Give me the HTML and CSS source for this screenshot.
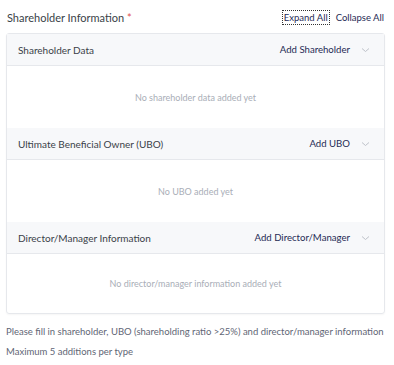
FILE: index.html
```html
<!DOCTYPE html>
<html lang="en">
<head>
  <meta charset="UTF-8">
  <meta name="viewport" content="width=device-width, initial-scale=1.0">
  <title>Shareholder Information</title>
  <link rel="stylesheet" href="styles.css">
</head>
<body>
  <div class="page">
    <div class="title-row">
      <div class="title">Shareholder Information <span class="req">*</span></div>
      <div class="actions">
        <span class="link focused">Expand All</span>
        <span class="link">Collapse All</span>
      </div>
    </div>

    <div class="card">
      <div class="section">
        <div class="section-head">
          <span class="section-name">Shareholder Data</span>
          <span class="add">Add Shareholder</span>
          <svg class="chev" width="9" height="6" viewBox="0 0 9 6"><path d="M1 1.5 L4.5 4.5 L8 1.5" fill="none" stroke="#b8bcc4" stroke-width="0.9"/></svg>
        </div>
        <div class="empty">No shareholder data added yet</div>
      </div>
      <div class="section">
        <div class="section-head">
          <span class="section-name">Ultimate Beneficial Owner (UBO)</span>
          <span class="add">Add UBO</span>
          <svg class="chev" width="9" height="6" viewBox="0 0 9 6"><path d="M1 1.5 L4.5 4.5 L8 1.5" fill="none" stroke="#b8bcc4" stroke-width="0.9"/></svg>
        </div>
        <div class="empty">No UBO added yet</div>
      </div>
      <div class="section last">
        <div class="section-head">
          <span class="section-name">Director/Manager Information</span>
          <span class="add">Add Director/Manager</span>
          <svg class="chev" width="9" height="6" viewBox="0 0 9 6"><path d="M1 1.5 L4.5 4.5 L8 1.5" fill="none" stroke="#b8bcc4" stroke-width="0.9"/></svg>
        </div>
        <div class="empty">No director/manager information added yet</div>
      </div>
    </div>

    <div class="notes">
      <p>Please fill in shareholder, UBO (shareholding ratio &gt;25%) and director/manager information</p>
      <p>Maximum 5 additions per type</p>
    </div>
  </div>
</body>
</html>
```

FILE: styles.css
```css
body {
  margin: 0;
  padding: 0;
  background: #ffffff;
  font-family: Lato, 'Open Sans', sans-serif;
  color: #333a45;
}

.page {
  padding: 7px 9px 0 6px;
}

.title-row {
  display: flex;
  justify-content: space-between;
  align-items: center;
  height: 20px;
  margin-bottom: 6px;
}

.title {
  font-size: 11px;
  color: #3a3f48;
  padding-left: 1px;
}

.req {
  color: #e0514f;
}

.actions {
  display: flex;
  gap: 6px;
  font-size: 9.5px;
  color: #1f2b55;
}

.link {
  padding: 1px 1px;
}

.focused {
  outline: 1px dotted #333;
  outline-offset: 0;
}

.card {
  border: 1px solid #e6e8ec;
  border-radius: 3px;
  box-shadow: 0 1px 2px rgba(0, 0, 0, 0.04);
}

.section-head {
  display: flex;
  align-items: center;
  height: 31px;
  padding: 0 14px 0 11px;
  background: #f7f8fa;
  border-bottom: 1px solid #e6e8ec;
  font-size: 10px;
}

.section-name {
  flex: 1;
  color: #3a3f48;
}

.add {
  color: #1f2b55;
  font-size: 9.6px;
  margin-right: 11px;
}

.chev {
  display: block;
}

.empty {
  height: 62px;
  display: flex;
  align-items: center;
  justify-content: center;
  font-size: 9px;
  color: #a9aeb7;
}

.last .empty {
  height: 59px;
}

.notes {
  margin-top: 11px;
  font-size: 9.5px;
  color: #5f6675;
}

.notes p {
  margin: 0 0 7px 0;
  line-height: 13px;
}
```
